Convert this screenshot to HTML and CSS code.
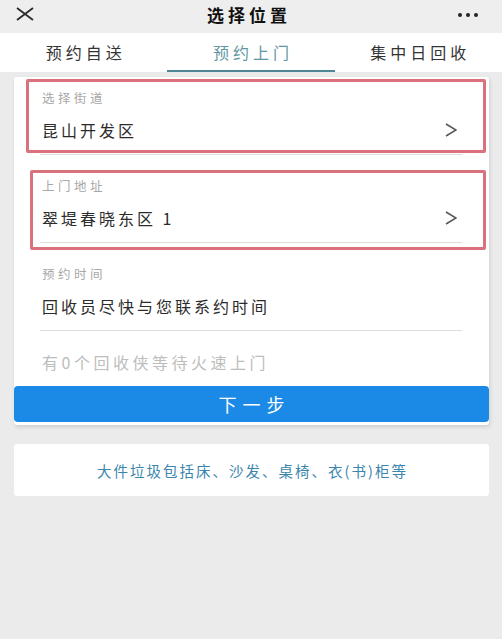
FILE: index.html
```html
<!DOCTYPE html>
<html lang="zh-CN">
<head>
<meta charset="UTF-8">
<meta name="viewport" content="width=device-width, initial-scale=1.0">
<title>选择位置</title>
<link rel="stylesheet" href="styles.css">
</head>
<body>
    <div class="topbar">
        <svg class="close-icon" width="18" height="14" viewBox="0 0 18 14">
            <path d="M1 1 L17 13 M17 1 L1 13" stroke="#2a2a2a" stroke-width="1.8" fill="none"/>
        </svg>
        <div class="title">选择位置</div>
        <div class="more"><span></span><span></span><span></span></div>
    </div>

    <div class="tabs">
        <div class="tab">预约自送</div>
        <div class="tab active">预约上门</div>
        <div class="tab">集中日回收</div>
    </div>

    <div class="card">
        <div class="field first">
            <div class="field-label">选择街道</div>
            <div class="field-value">
                <span>昆山开发区</span>
                <svg class="chevron" width="12" height="14" viewBox="0 0 12 14"><path d="M1 1 L11 7 L1 13" stroke="#555" stroke-width="1.5" fill="none"/></svg>
            </div>
            <div class="mark mark-street"></div>
        </div>
        <div class="field">
            <div class="field-label">上门地址</div>
            <div class="field-value">
                <span>翠堤春晓东区 1</span>
                <svg class="chevron" width="12" height="14" viewBox="0 0 12 14"><path d="M1 1 L11 7 L1 13" stroke="#555" stroke-width="1.5" fill="none"/></svg>
            </div>
            <div class="mark mark-address"></div>
        </div>
        <div class="field">
            <div class="field-label">预约时间</div>
            <div class="field-value"><span>回收员尽快与您联系约时间</span></div>
        </div>
        <div class="note">有0个回收侠等待火速上门</div>
        <button class="next-btn" type="button">下一步</button>
    </div>

    <div class="tip-card">大件垃圾包括床、沙发、桌椅、衣(书)柜等</div>
</body>
</html>
```

FILE: styles.css
```css
body {
    margin: 0;
    padding: 0;
    background: #ebebeb;
    font-family: "Noto Sans CJK SC", "Noto Sans", sans-serif;
    color: #333;
}

.topbar {
    height: 33px;
    background: #eeeeee;
    display: grid;
    grid-template-columns: 1fr auto 1fr;
    align-items: center;
    padding: 0 24px 0 16px;
}

.close-icon {
    display: block;
    margin-top: -5px;
}

.title {
    font-size: 17px;
    font-weight: bold;
    color: #111;
    letter-spacing: 4px;
    text-indent: 4px;
    margin-top: -4px;
}

.more {
    display: flex;
    justify-content: flex-end;
    gap: 4px;
    margin-top: -4px;
}

.more span {
    width: 4px;
    height: 4px;
    border-radius: 50%;
    background: #222;
}

.tabs {
    display: grid;
    grid-template-columns: repeat(3, 1fr);
    background: #fff;
    height: 39px;
}

.tab {
    font-size: 16px;
    letter-spacing: 4px;
    text-indent: 4px;
    color: #333;
    display: flex;
    align-items: center;
    justify-content: center;
    border-bottom: 2px solid transparent;
}

.tab.active {
    color: #5f97a2;
    border-bottom-color: #4f8894;
}

.card {
    margin: 5px 13px 0 14px;
    background: #fff;
    border-radius: 3px;
    box-shadow: 1px 2px 4px rgba(0, 0, 0, 0.12);
    padding-bottom: 3px;
}

.field {
    position: relative;
    margin: 0 27px 0 26px;
    padding: 21px 0 12px 2px;
    border-bottom: 1px solid #dedede;
}

.field.first {
    padding-top: 11px;
}

.field-label {
    font-size: 12.5px;
    line-height: 20px;
    letter-spacing: 3.5px;
    color: #a8a8a8;
}

.field-value {
    margin-top: 10px;
    display: flex;
    align-items: center;
    justify-content: space-between;
    font-size: 16px;
    line-height: 24px;
    letter-spacing: 3px;
    color: #2b2b2b;
}

.chevron {
    display: block;
    margin-right: 5px;
}

/* red highlight boxes drawn over the fields */
.mark {
    position: absolute;
    border: 3px solid #d9727c;
    border-radius: 2px;
}

.mark-street {
    top: 2px;
    bottom: 1px;
    left: -14px;
    right: -24px;
}

.mark-address {
    top: 15px;
    bottom: -8px;
    left: -10px;
    right: -24px;
}

.note {
    margin: 19px 0 0 28px;
    font-size: 16px;
    line-height: 24px;
    letter-spacing: 3.5px;
    color: #bdbdbd;
}

.next-btn {
    display: block;
    width: 100%;
    height: 36px;
    margin-top: 12px;
    border: none;
    border-radius: 4px;
    background: #1b8ae6;
    color: #fff;
    font-family: inherit;
    font-size: 18px;
    letter-spacing: 6px;
    text-indent: 6px;
    cursor: pointer;
}

.tip-card {
    margin: 19px 13px 0 14px;
    height: 52px;
    background: #fff;
    border-radius: 3px;
    display: flex;
    align-items: center;
    justify-content: center;
    font-size: 14.5px;
    letter-spacing: 2px;
    text-indent: 2px;
    color: #3a85ad;
}
```
